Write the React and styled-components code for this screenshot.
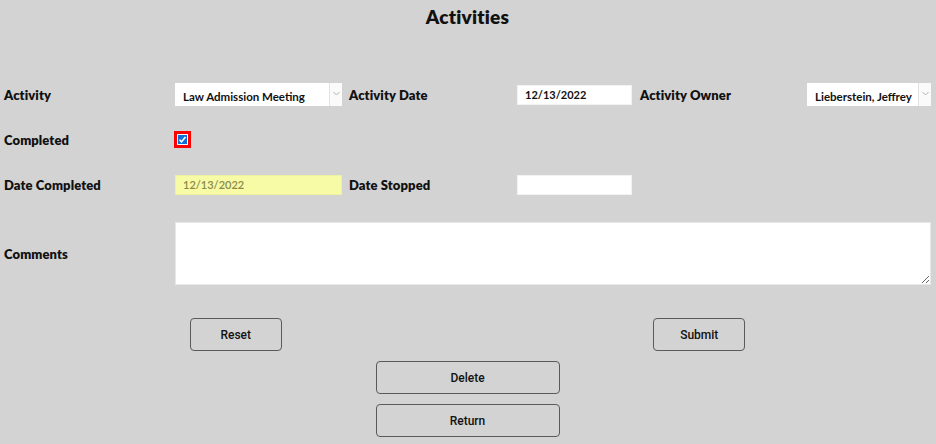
import React from 'react';
import styled, { createGlobalStyle } from 'styled-components';

const GlobalStyle = createGlobalStyle`
  html, body {
    margin: 0;
    padding: 0;
    background: #d3d3d3;
  }
  body {
    font-family: Lato, "Liberation Sans", sans-serif;
    color: #111;
  }
`;

const ChevronIcon = () => (
  <svg width="7" height="5" viewBox="0 0 7 5">
    <path d="M0.5 1 L3.5 4 L6.5 1" fill="none" stroke="#b0b0b0" strokeWidth="1" />
  </svg>
);

const CheckIcon = () => (
  <svg width="9" height="9" viewBox="0 0 9 9">
    <path d="M1.5 4.8 L3.5 6.8 L7.5 2" fill="none" stroke="#fff" strokeWidth="1.6" />
  </svg>
);

const App = () => {
  return (
    <Page>
      <GlobalStyle />
      <Title>Activities</Title>

      <Form>
        <Label>Activity</Label>
        <Select>
          <SelectValue>Law Admission Meeting</SelectValue>
          <SelectArrow><ChevronIcon /></SelectArrow>
        </Select>
        <Label indent="7px">Activity Date</Label>
        <DateBox>12/13/2022</DateBox>
        <Label indent="8px">Activity Owner</Label>
        <Select>
          <SelectValue>Lieberstein, Jeffrey</SelectValue>
          <SelectArrow><ChevronIcon /></SelectArrow>
        </Select>

        <Label>Completed</Label>
        <CheckCell>
          <CheckRing>
            <CheckBox><CheckIcon /></CheckBox>
          </CheckRing>
        </CheckCell>

        <Label>Date Completed</Label>
        <DateBox highlight>12/13/2022</DateBox>
        <Label indent="7px">Date Stopped</Label>
        <DateBox />

        <CommentsLabel>Comments</CommentsLabel>
        <Comments />
      </Form>

      <ButtonPair>
        <Button>Reset</Button>
        <Button>Submit</Button>
      </ButtonPair>
      <ButtonStack>
        <Button wide>Delete</Button>
        <Button wide>Return</Button>
      </ButtonStack>
    </Page>
  );
};

const Page = styled.div`
  width: 936px;
  height: 444px;
  box-sizing: border-box;
  padding: 0 5px 0 4px;
  overflow: hidden;
`;

const Title = styled.h1`
  margin: 0;
  padding-top: 5px;
  height: 30px;
  text-align: center;
  font-size: 19px;
  font-weight: 800;
  line-height: 24px;
  letter-spacing: 0.2px;
`;

const Form = styled.div`
  margin-top: 37px;
  display: grid;
  grid-template-columns: 171px 167px 175px 115px 175px 1fr;
  grid-template-rows: 45px 45px 45px 15px 63px;
  align-items: center;
`;

const Label = styled.div`
  padding-left: ${(p) => p.indent || '0'};
  font-size: 13px;
  font-weight: 800;
  letter-spacing: 0.1px;
`;

const CommentsLabel = styled(Label)`
  grid-row: 5;
  grid-column: 1;
`;

const Select = styled.div`
  display: flex;
  height: 23px;
  background: #fff;
`;

const SelectValue = styled.div`
  flex: 1;
  display: flex;
  align-items: center;
  padding: 3px 0 0 8px;
  font-size: 11.5px;
  font-weight: 700;
  white-space: nowrap;
  overflow: hidden;
  border-right: 1px solid #e2e2e2;
`;

const SelectArrow = styled.div`
  width: 12px;
  display: flex;
  justify-content: center;
  padding-top: 8px;
  background: #fafafa;
`;

const DateBox = styled.div`
  height: 20px;
  box-sizing: border-box;
  display: flex;
  align-items: center;
  padding-left: 7px;
  font-size: 11px;
  font-weight: ${(p) => (p.highlight ? 600 : 700)};
  color: ${(p) => (p.highlight ? '#8a8a48' : '#111')};
  background: ${(p) => (p.highlight ? '#f7fba6' : '#fff')};
  border: 1px solid ${(p) => (p.highlight ? '#eef2a0' : '#f2f2f2')};
`;

const CheckCell = styled.div`
  grid-column: 2 / span 5;
  display: flex;
  margin-left: -1px;
`;

const CheckRing = styled.div`
  width: 17px;
  height: 17px;
  box-sizing: border-box;
  border: 3px solid #ff0000;
  display: flex;
  align-items: center;
  justify-content: center;
`;

const CheckBox = styled.div`
  width: 11px;
  height: 11px;
  box-sizing: border-box;
  border: 1px solid #fff;
  background: #0a6fd6;
  display: flex;
  align-items: center;
  justify-content: center;
`;

const Comments = styled.textarea`
  grid-row: 5;
  grid-column: 2 / span 5;
  height: 63px;
  box-sizing: border-box;
  margin: 0;
  border: 1px solid #e8e8e8;
  background: #fff;
  font-family: Lato, "Liberation Sans", sans-serif;
  resize: both;
  outline: none;
`;

const ButtonPair = styled.div`
  margin-top: 33px;
  display: grid;
  grid-template-columns: 1fr 1fr;
  justify-items: center;
`;

const ButtonStack = styled.div`
  margin-top: 10px;
  display: flex;
  flex-direction: column;
  align-items: center;
  gap: 10px;
`;

const Button = styled.button`
  width: ${(p) => (p.wide ? '184px' : '92px')};
  height: 33px;
  box-sizing: border-box;
  border: 1px solid #5a5a5a;
  border-radius: 4px;
  background: #d3d3d3;
  font-family: Roboto, "Liberation Sans", sans-serif;
  font-size: 12px;
  font-weight: 500;
  color: #111;
  cursor: pointer;
`;

export default App;
